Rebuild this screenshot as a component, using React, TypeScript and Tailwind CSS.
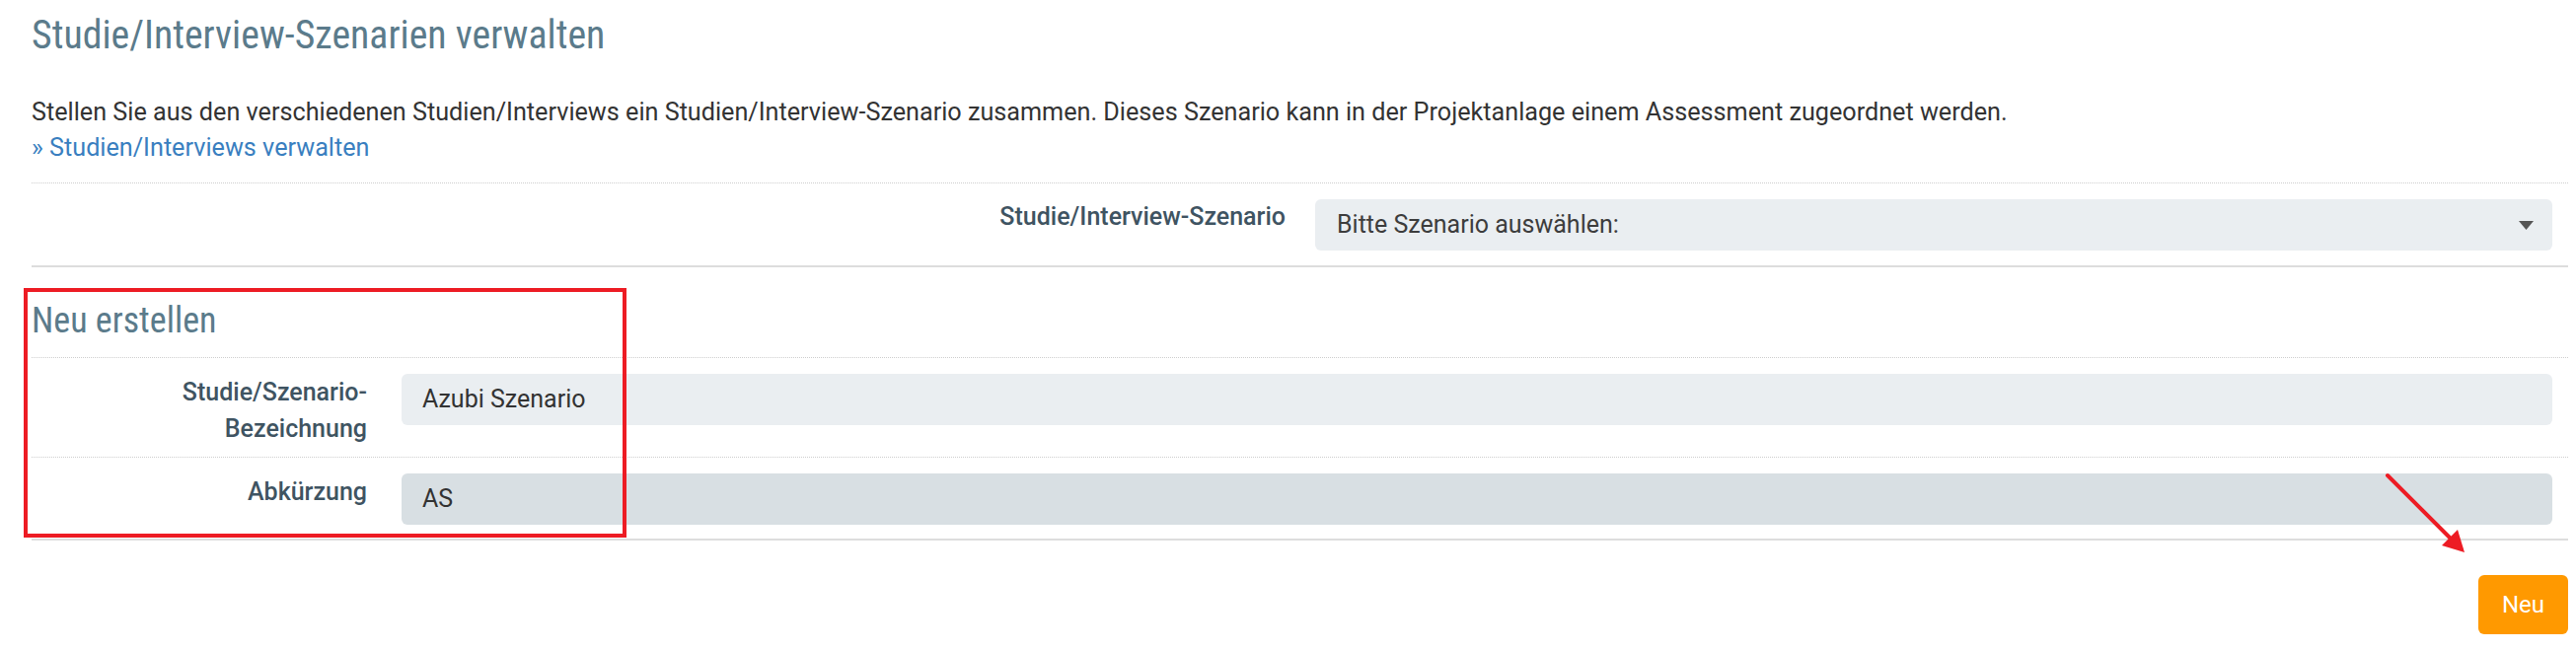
import React from "react";

const condensed = { fontFamily: '"Roboto Condensed", "Roboto", "Liberation Sans Narrow", sans-serif', fontStretch: "condensed" as const };

export default function App() {
  return (
    <div
      className="relative w-[2611px] h-[660px] bg-white pl-[32px] pr-[8px] overflow-hidden"
      style={{ fontFamily: 'Roboto, "Liberation Sans", sans-serif' }}
    >
      <h1 className="pt-[16px] text-[39.8px] leading-[40px] font-normal text-[#5b7b8b]" style={condensed}>
        Studie/Interview-Szenarien verwalten
      </h1>
      <p className="mt-[40px] text-[25.2px] leading-[36px] text-[#333333]">
        Stellen Sie aus den verschiedenen Studien/Interviews ein Studien/Interview-Szenario zusammen. Dieses Szenario kann in der Projektanlage einem Assessment zugeordnet werden.
      </p>
      <a className="block text-[25.2px] leading-[36px] text-[#3a7fc0]">» Studien/Interviews verwalten</a>

      <div className="mt-[17px] flex items-start border-t border-dotted border-[#cfcfcf] pt-[16px] pb-[15px]">
        <div className="w-[1271px] shrink-0 text-right text-[25px] leading-[36px] font-medium text-[#3f5462]">
          Studie/Interview-Szenario
        </div>
        <div className="ml-[30px] mr-[16px] flex h-[52px] flex-1 items-center justify-between rounded-[6px] bg-[#eaeef1] pl-[22px] pr-[19px]">
          <span className="text-[25px] leading-[36px] text-[#3d3d3d]">Bitte Szenario auswählen:</span>
          <svg width="15" height="9" viewBox="0 0 15 9">
            <path d="M0 0 L15 0 L7.5 9 Z" fill="#555555" />
          </svg>
        </div>
      </div>
      <div className="h-[2px] bg-[#dddddd]" />

      <h2 className="mt-[34px] text-[36px] leading-[40px] font-normal text-[#5b7b8b]" style={condensed}>
        Neu erstellen
      </h2>

      <div className="mt-[17px] flex items-start border-t border-dotted border-[#cfcfcf] pt-[16px] pb-[10px]">
        <div className="w-[340px] shrink-0 text-right text-[25px] leading-[37px] font-medium text-[#3f5462]">
          Studie/Szenario-
          <br />
          Bezeichnung
        </div>
        <div className="ml-[35px] mr-[16px] flex h-[52px] flex-1 items-center rounded-[6px] bg-[#eaeef1] pl-[21px]">
          <span className="text-[25px] leading-[36px] text-[#333333]">Azubi Szenario</span>
        </div>
      </div>

      <div className="flex items-start border-t border-dotted border-[#cfcfcf] pt-[16px] pb-[14px]">
        <div className="w-[340px] shrink-0 text-right text-[25px] leading-[37px] font-medium text-[#3f5462]">
          Abkürzung
        </div>
        <div className="ml-[35px] mr-[16px] flex h-[52px] flex-1 items-center rounded-[6px] bg-[#d8dfe3] pl-[21px]">
          <span className="text-[25px] leading-[36px] text-[#333333]">AS</span>
        </div>
      </div>
      <div className="h-[2px] bg-[#dddddd]" />

      <div className="mt-[35px] flex justify-end">
        <button className="h-[60px] w-[91px] rounded-[6px] bg-[#ff9900] text-[24px] leading-[36px] text-white">
          Neu
        </button>
      </div>

      {/* annotation: red box */}
      <div className="pointer-events-none absolute left-[24px] top-[292px] h-[253px] w-[611px] border-[4px] border-[#ed1c24]" />

      {/* annotation: arrow */}
      <svg className="pointer-events-none absolute left-0 top-0" width="2611" height="660">
        <line x1="2420" y1="482" x2="2484" y2="546" stroke="#ed1c24" strokeWidth="4" strokeLinecap="round" />
        <path d="M2498 560 L2475 553 L2491 537 Z" fill="#ed1c24" />
      </svg>
    </div>
  );
}
